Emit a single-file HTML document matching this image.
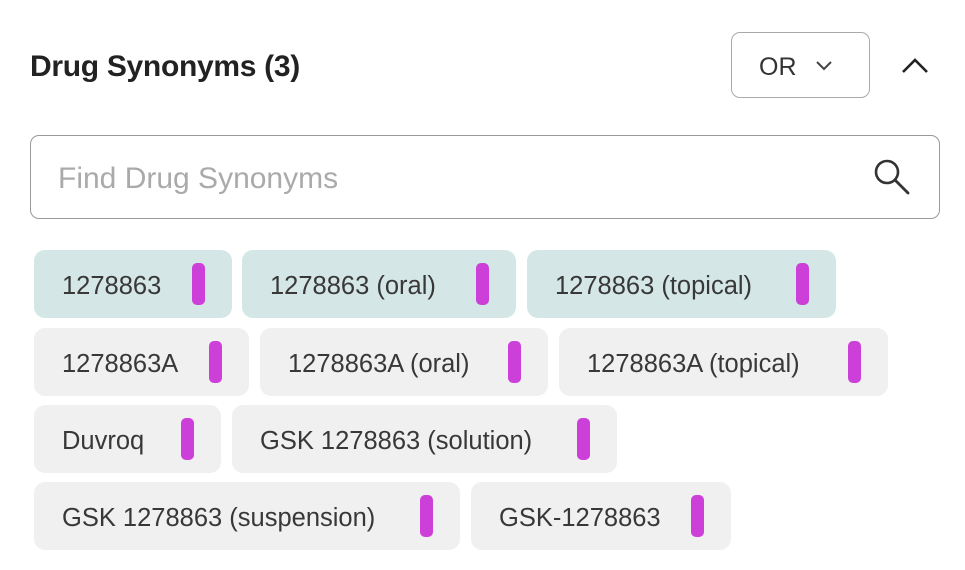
<!DOCTYPE html>
<html><head><style>
body{margin:0;width:965px;height:570px;background:#fff;position:relative;overflow:hidden;font-family:"Liberation Sans",sans-serif;color:#333}
.t{position:absolute;height:68px;border-radius:11px;background:#f0f0f0}
.t.s{background:#d4e6e5}
.t span{position:absolute;left:28px;top:2px;line-height:68px;font-size:25.5px;color:#383838;white-space:nowrap}
.t i{position:absolute;right:27px;top:13px;width:13px;height:42px;border-radius:5px;background:#cd3fd9}
</style></head><body>
<div style="position:absolute;left:30px;top:50px;font-size:30px;font-weight:bold;color:#222;letter-spacing:-0.3px">Drug Synonyms (3)</div>
<div style="position:absolute;left:731px;top:32px;width:139px;height:66px;border:1.5px solid #aaa;border-radius:9px;box-sizing:border-box"></div>
<div style="position:absolute;left:759px;top:53px;font-size:25px;color:#333">OR</div>
<svg style="position:absolute;left:815px;top:59px" width="18" height="12"><path d="M2 3 L9 10 L16 3" fill="none" stroke="#444" stroke-width="2"/></svg>
<svg style="position:absolute;left:900px;top:56px" width="30" height="20"><path d="M3 16 L15 4 L27 16" fill="none" stroke="#222" stroke-width="2.6"/></svg>
<div style="position:absolute;left:30px;top:135px;width:910px;height:84px;border:1.5px solid #999;border-radius:9px;box-sizing:border-box"></div>
<div style="position:absolute;left:58px;top:162px;font-size:30px;color:#aaa">Find Drug Synonyms</div>
<svg style="position:absolute;left:872px;top:157px" width="42" height="42"><circle cx="15" cy="15" r="11" fill="none" stroke="#333" stroke-width="2.6"/><path d="M23 23 L36 36" stroke="#333" stroke-width="2.8" stroke-linecap="round"/></svg>

<div class="t s" style="left:34px;top:250px;width:198px"><span>1278863</span><i></i></div>
<div class="t s" style="left:242px;top:250px;width:274px"><span>1278863 (oral)</span><i></i></div>
<div class="t s" style="left:527px;top:250px;width:309px"><span>1278863 (topical)</span><i></i></div>

<div class="t" style="left:34px;top:328px;width:215px"><span>1278863A</span><i></i></div>
<div class="t" style="left:260px;top:328px;width:288px"><span>1278863A (oral)</span><i></i></div>
<div class="t" style="left:559px;top:328px;width:329px"><span>1278863A (topical)</span><i></i></div>

<div class="t" style="left:34px;top:405px;width:187px"><span>Duvroq</span><i></i></div>
<div class="t" style="left:232px;top:405px;width:385px"><span>GSK 1278863 (solution)</span><i></i></div>

<div class="t" style="left:34px;top:482px;width:426px"><span>GSK 1278863 (suspension)</span><i></i></div>
<div class="t" style="left:471px;top:482px;width:260px"><span>GSK-1278863</span><i></i></div>
</body></html>
